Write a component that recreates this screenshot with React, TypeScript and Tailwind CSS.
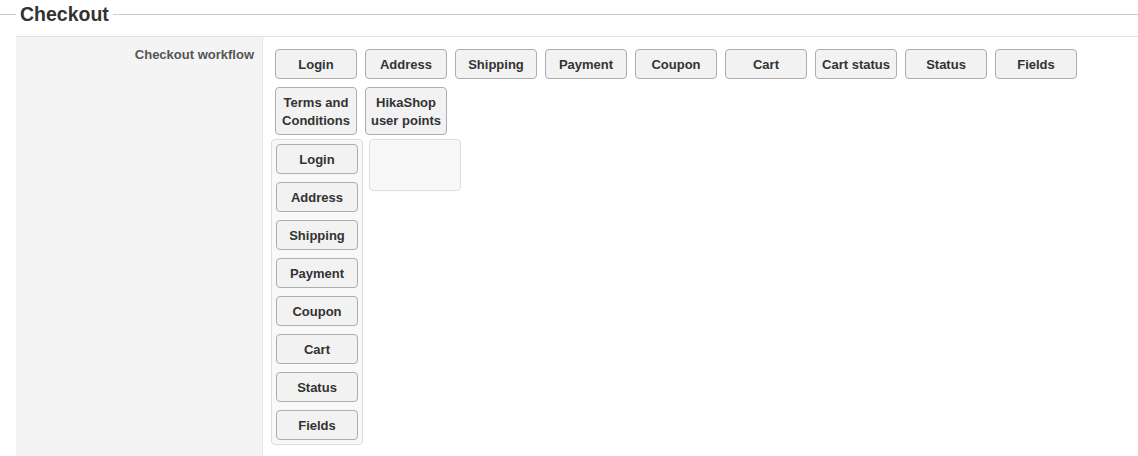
import React from 'react';

const TOP_STEPS = [
  'Login',
  'Address',
  'Shipping',
  'Payment',
  'Coupon',
  'Cart',
  'Cart status',
  'Status',
  'Fields',
  'Terms and Conditions',
  'HikaShop user points',
];

const WORKFLOW_STEPS = ['Login', 'Address', 'Shipping', 'Payment', 'Coupon', 'Cart', 'Status', 'Fields'];

function StepButton({ label, className = '' }: { label: string; className?: string }) {
  return (
    <div
      className={`w-[82px] rounded-[4px] border border-[#adadad] bg-[#f2f2f2] px-1 pb-[4px] pt-[6px] text-center text-[13px] font-bold leading-[18px] text-[#333] ${className}`}
    >
      {label}
    </div>
  );
}

export default function App() {
  return (
    <div className="min-h-screen bg-white font-['Liberation_Sans',Arial,sans-serif]">
      <div className="flex items-center pt-[2px]">
        <div className="h-px w-4 bg-[#cccccc]" />
        <h2 className="px-1 text-[19.5px] font-bold leading-[24px] text-[#333]">Checkout</h2>
        <div className="h-px flex-1 bg-[#cccccc]" />
      </div>

      <div className="ml-4 mt-[10px] flex border-t border-[#e3e3e3]">
        <div className="w-[247px] shrink-0 border-r border-[#e8e8e8] bg-[#f4f4f4] pr-2 pt-[5px] text-right">
          <span className="text-[13px] font-bold leading-[18px] text-[#555]">Checkout workflow</span>
        </div>

        <div className="flex-1 px-2 pb-4 pt-2">
          <div className="flex flex-wrap">
            {TOP_STEPS.map((step) => (
              <StepButton key={step} label={step} className="m-1" />
            ))}
          </div>

          <div className="flex items-start">
            <div className="flex w-[92px] flex-col gap-2 rounded-[4px] border border-[#dddddd] bg-[#f8f8f8] p-1">
              {WORKFLOW_STEPS.map((step) => (
                <StepButton key={step} label={step} />
              ))}
            </div>
            <div className="ml-[6px] h-[52px] w-[92px] rounded-[4px] border border-[#dddddd] bg-[#f8f8f8]" />
          </div>
        </div>
      </div>
    </div>
  );
}
